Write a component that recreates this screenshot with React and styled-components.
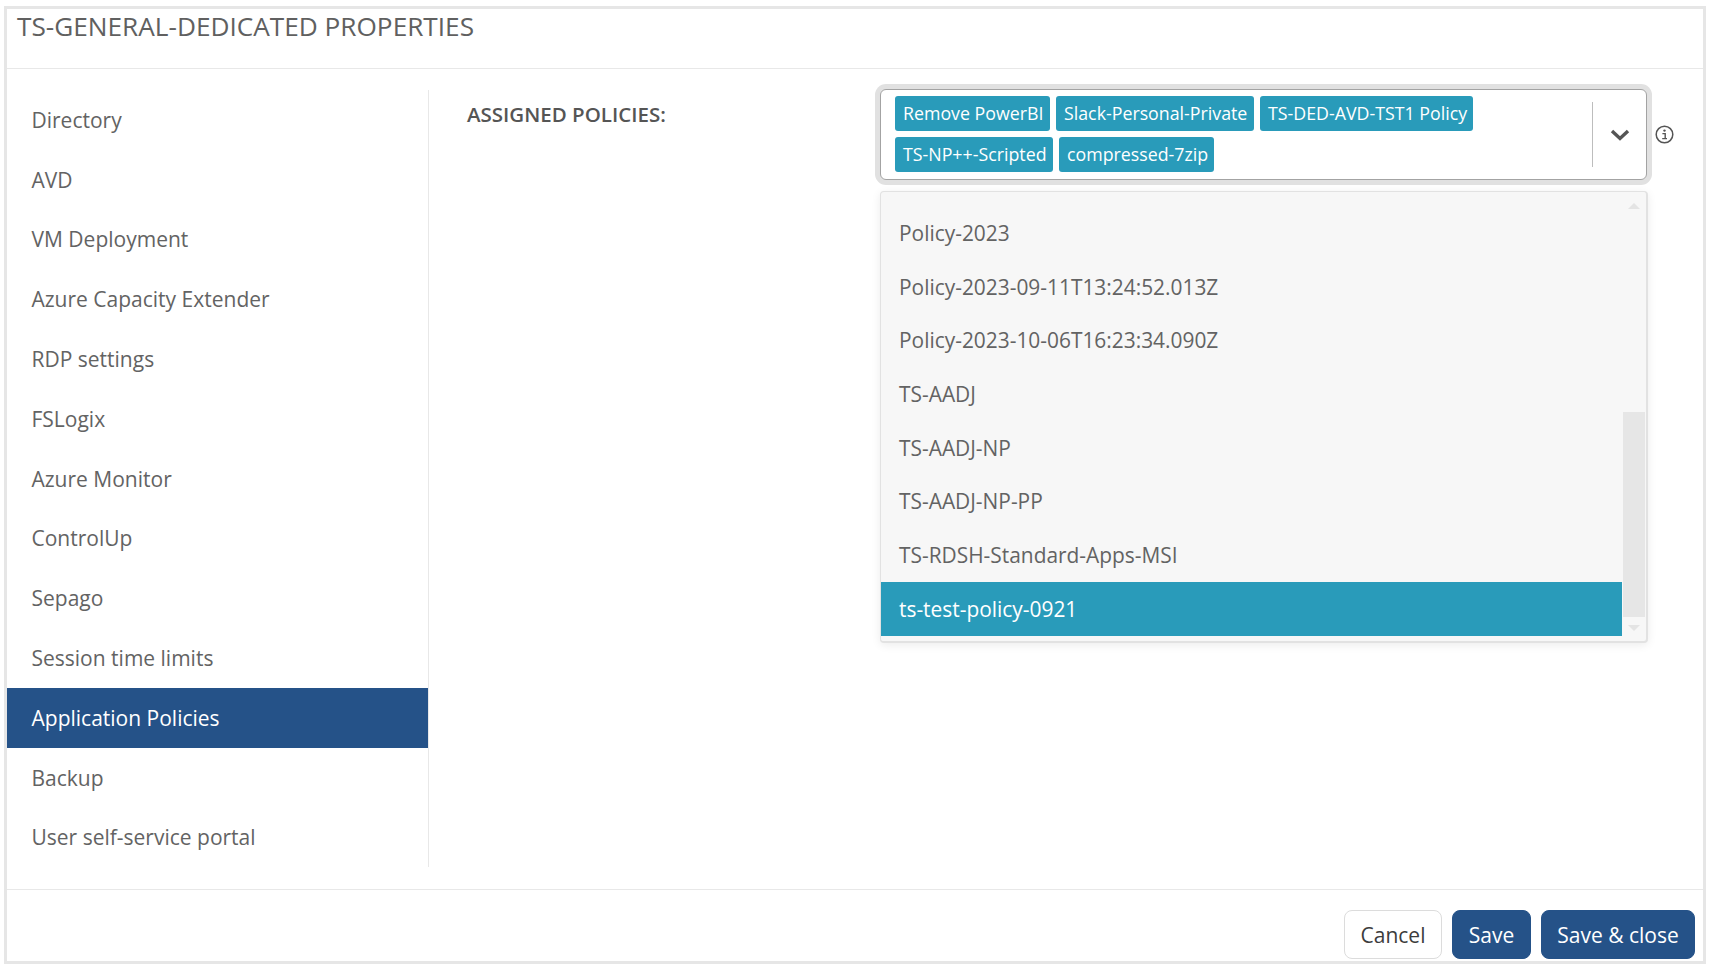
import React from 'react';
import styled, { createGlobalStyle } from 'styled-components';

const GlobalStyle = createGlobalStyle`
  html, body {
    margin: 0;
    padding: 0;
    height: 100%;
    overflow: hidden;
    background: #fff;
  }
  * {
    box-sizing: border-box;
  }
`;

const Page = styled.div`
  padding: 6px 3px 0 4px;
  font-family: "Open Sans", "Liberation Sans", sans-serif;
  color: #5f5f5f;
`;

const Frame = styled.div`
  display: flex;
  flex-direction: column;
  height: 958px;
  border: 3px solid #e6e6e6;
  background: #fff;
`;

const Header = styled.div`
  height: 60px;
  flex: none;
  padding: 1px 0 0 10px;
  border-bottom: 1px solid #e8e8e8;
`;

const Title = styled.h1`
  margin: 0;
  font-size: 26.2px;
  line-height: 32px;
  font-weight: 400;
  color: #606060;
`;

const Body = styled.div`
  flex: 1;
  display: flex;
  min-height: 0;
  padding: 21px 0 22px;
  border-bottom: 1px solid #e8e8e8;
`;

const Sidebar = styled.nav`
  width: 422px;
  flex: none;
  border-right: 1px solid #e8e8e8;
`;

const NavItem = styled.div`
  height: 59.8px;
  display: flex;
  align-items: center;
  padding-left: 24.5px;
  font-size: 21px;
  color: ${props => (props.$active ? '#fff' : '#636363')};
  background: ${props => (props.$active ? '#255288' : 'transparent')};
`;

const Content = styled.div`
  flex: 1;
  display: flex;
  align-items: flex-start;
  padding-left: 38px;
`;

const FieldLabel = styled.div`
  width: 409px;
  flex: none;
  padding-top: 10px;
  font-size: 20.5px;
  line-height: 28px;
  font-weight: 600;
  color: #555;
`;

const Field = styled.div`
  width: 768px;
  flex: none;
  margin: -1px 0 0 4px;
`;

const SelectRow = styled.div`
  display: flex;
  align-items: center;
`;

const SelectBox = styled.div`
  width: 767px;
  height: 91px;
  flex: none;
  display: flex;
  align-items: center;
  border: 1.5px solid #a3a3a3;
  border-radius: 6px;
  box-shadow: 0 0 0 5px #e1e1e1;
  background: #fff;
`;

const TagList = styled.div`
  flex: 1;
  align-self: flex-start;
  display: flex;
  flex-wrap: wrap;
  gap: 6px;
  padding: 5.5px 0 0 13.5px;
`;

const Tag = styled.span`
  height: 35px;
  display: flex;
  align-items: center;
  width: ${props => props.$width}px;
  padding-left: 8.5px;
  border-radius: 3px;
  background: #299bba;
  color: #fff;
  font-size: 17.8px;
  white-space: nowrap;
`;

const Toggle = styled.div`
  width: 54px;
  height: 65px;
  flex: none;
  display: flex;
  align-items: center;
  justify-content: center;
  border-left: 1px solid #bdbdbd;
`;

const InfoIcon = styled.svg`
  width: 19px;
  height: 19px;
  flex: none;
  margin-left: 8px;
`;

const Dropdown = styled.div`
  width: 768px;
  height: 452px;
  margin-top: 11px;
  display: flex;
  border: 1px solid #e2e2e2;
  border-bottom-width: 2px;
  border-right-width: 2px;
  border-radius: 4px;
  background: #f7f7f7;
  box-shadow: 0 2px 10px rgba(0, 0, 0, 0.08);
`;

const OptionList = styled.div`
  flex: 1;
  display: flex;
  flex-direction: column;
  justify-content: flex-end;
  padding-bottom: 5px;
`;

const Option = styled.div`
  height: ${props => (props.$selected ? 54 : 53.7)}px;
  flex: none;
  display: flex;
  align-items: center;
  padding-left: 18px;
  font-size: 20.9px;
  color: ${props => (props.$selected ? '#fff' : '#636363')};
  background: ${props => (props.$selected ? '#299bba' : 'transparent')};
`;

const Scrollbar = styled.div`
  width: 22px;
  flex: none;
  margin: 0 1px;
  display: flex;
  flex-direction: column;
  align-items: center;
`;

const ArrowUp = styled.div`
  margin-top: 11px;
  border-left: 6px solid transparent;
  border-right: 6px solid transparent;
  border-bottom: 6px solid #e4e4e4;
`;

const Thumb = styled.div`
  width: 100%;
  height: 205px;
  margin-top: 203px;
  background: #e6e6e6;
`;

const ArrowDown = styled.div`
  margin-top: 8px;
  border-left: 6px solid transparent;
  border-right: 6px solid transparent;
  border-top: 6px solid #e4e4e4;
`;

const Footer = styled.div`
  height: 71px;
  flex: none;
  display: flex;
  justify-content: flex-end;
  align-items: flex-start;
  gap: 10px;
  padding: 20px 8px 0 0;
`;

const Button = styled.button`
  height: 49px;
  width: ${props => props.$width}px;
  padding: 0;
  border-radius: 8px;
  border: 1px solid ${props => (props.$primary ? '#255288' : '#dcdcdc')};
  background: ${props => (props.$primary ? '#255288' : '#fff')};
  color: ${props => (props.$primary ? '#fff' : '#3c3c3c')};
  font-family: inherit;
  font-size: 21px;
`;

const NAV_ITEMS = [
  'Directory',
  'AVD',
  'VM Deployment',
  'Azure Capacity Extender',
  'RDP settings',
  'FSLogix',
  'Azure Monitor',
  'ControlUp',
  'Sepago',
  'Session time limits',
  'Application Policies',
  'Backup',
  'User self-service portal',
];

const OPTIONS = [
  'Policy-2023',
  'Policy-2023-09-11T13:24:52.013Z',
  'Policy-2023-10-06T16:23:34.090Z',
  'TS-AADJ',
  'TS-AADJ-NP',
  'TS-AADJ-NP-PP',
  'TS-RDSH-Standard-Apps-MSI',
];

export default function App() {
  return (
    <Page>
      <GlobalStyle />
      <Frame>
        <Header>
          <Title>TS-GENERAL-DEDICATED PROPERTIES</Title>
        </Header>
        <Body>
          <Sidebar>
            {NAV_ITEMS.map(item => (
              <NavItem key={item} $active={item === 'Application Policies'}>
                {item}
              </NavItem>
            ))}
          </Sidebar>
          <Content>
            <FieldLabel>ASSIGNED POLICIES:</FieldLabel>
            <Field>
              <SelectRow>
                <SelectBox>
                  <TagList>
                    <Tag $width={155}>Remove PowerBI</Tag>
                    <Tag $width={198}>Slack-Personal-Private</Tag>
                    <Tag $width={213}>TS-DED-AVD-TST1 Policy</Tag>
                    <Tag $width={158}>TS-NP++-Scripted</Tag>
                    <Tag $width={155}>compressed-7zip</Tag>
                  </TagList>
                  <Toggle>
                    <svg width="20" height="12" viewBox="0 0 20 12" fill="none">
                      <path d="M2 2 L10 9.5 L18 2" stroke="#555" strokeWidth="3.4" />
                    </svg>
                  </Toggle>
                </SelectBox>
                <InfoIcon viewBox="0 0 19 19" fill="none">
                  <circle cx="9.5" cy="9.5" r="8.3" stroke="#555" strokeWidth="1.5" />
                  <circle cx="9.5" cy="5.6" r="1.2" fill="#555" />
                  <path d="M7.4 8.6 H10.2 V13.2 M7.2 13.6 H12" stroke="#555" strokeWidth="1.4" />
                </InfoIcon>
              </SelectRow>
              <Dropdown>
                <OptionList>
                  {OPTIONS.map(option => (
                    <Option key={option}>{option}</Option>
                  ))}
                  <Option $selected>ts-test-policy-0921</Option>
                </OptionList>
                <Scrollbar>
                  <ArrowUp />
                  <Thumb />
                  <ArrowDown />
                </Scrollbar>
              </Dropdown>
            </Field>
          </Content>
        </Body>
        <Footer>
          <Button $width={98}>Cancel</Button>
          <Button $primary $width={79}>Save</Button>
          <Button $primary $width={154}>Save &amp; close</Button>
        </Footer>
      </Frame>
    </Page>
  );
}
